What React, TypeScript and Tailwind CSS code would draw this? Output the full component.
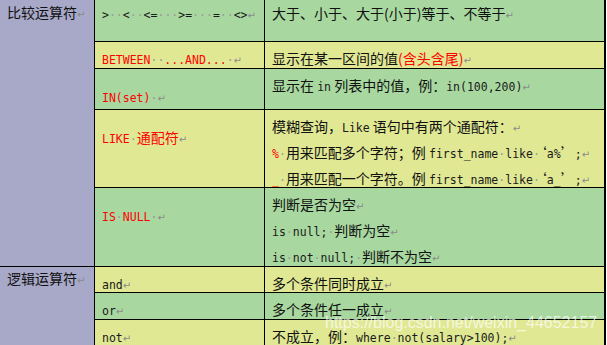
import React from "react";

const green = "bg-[#a8d8a0]";
const yellow = "bg-[#e0e894]";
const mono = "font-['DejaVu_Sans_Mono',monospace] text-[11.5px] leading-none";

// word "show formatting" marks
const Ret = () => (
  <span className="font-['DejaVu_Sans',sans-serif] text-[10px] leading-none text-[#8a8a8a]">↵</span>
);
const Sp = ({ n = 1 }: { n?: number }) => (
  <span className="text-[#9a9a9a]">{"·".repeat(n)}</span>
);
const M = ({ children, red }: { children: React.ReactNode; red?: boolean }) => (
  <span className={`${mono} ${red ? "text-[#ff0000]" : "text-[#1a1a1a]"}`}>{children}</span>
);
const Red = ({ children }: { children: React.ReactNode }) => (
  <span className="text-[#ff0000]">{children}</span>
);

export default function App() {
  return (
    <div className="relative w-[607px] h-[345px] overflow-hidden bg-white font-['Noto_Sans_CJK_SC',sans-serif] text-[14px] text-[#111]">
      <div className="grid w-fit grid-cols-[94px_169px_339px] grid-rows-[41px_26px_40px_77px_78px_25px_26px_26px] gap-px bg-black pr-[2px]">
        {/* 比较运算符 */}
        <div className="row-span-5 bg-[#a8a8c8] pl-[7px] pt-[1px] leading-[23px]">
          比较运算符<Ret />
        </div>
        <div className={`${green} pl-[7px] leading-[26px]`}>
          <M>
            &gt;<Sp n={2} />&lt;<Sp n={2} />&lt;=<Sp n={3} />&gt;=<Sp n={3} />=<Sp n={2} />&lt;&gt;
          </M>
          <Ret />
        </div>
        <div className={`${green} pl-[7px] leading-[26px]`}>
          大于、小于、大于(小于)等于、不等于<Ret />
        </div>

        <div className={`${yellow} pl-[7px] pt-[3px] leading-[26px]`}>
          <M red>
            BETWEEN<Sp n={2} />...AND...<Sp />
          </M>
          <Ret />
        </div>
        <div className={`${yellow} pl-[7px] pt-[3px] leading-[26px]`}>
          显示在某一区间的值<Red>(含头含尾)</Red>
          <Ret />
        </div>

        <div className={`${green} pl-[7px] pt-[14px] leading-[26px]`}>
          <M red>
            IN(set)<Sp />
          </M>
          <Ret />
        </div>
        <div className={`${green} pl-[7px] pt-[3px] leading-[26px]`}>
          显示在 <M>in</M> 列表中的值，例：<M>in(100,200)</M>
          <Ret />
        </div>

        <div className={`${yellow} pl-[7px] pt-[14px] leading-[26px]`}>
          <M red>
            LIKE<Sp />
          </M>
          <Red>通配符</Red>
          <Ret />
        </div>
        <div className={`${yellow} pl-[7px] pt-[3px] leading-[26px]`}>
          <div>
            模糊查询，<M>Like</M> 语句中有两个通配符：<Ret />
          </div>
          <div>
            <M red>%</M>
            <M>
              <Sp />
            </M>
            用来匹配多个字符；例 <M>first_name<Sp />like<Sp /></M>‘<M>a%</M>’<M>;</M>
            <Ret />
          </div>
          <div>
            <M red>_</M>
            <M>
              <Sp />
            </M>
            用来匹配一个字符。例 <M>first_name<Sp />like<Sp /></M>‘<M>a_</M>’<M>;</M>
            <Ret />
          </div>
        </div>

        <div className={`${green} pl-[7px] pt-[14px] leading-[26px]`}>
          <M red>
            IS<Sp />NULL<Sp />
          </M>
          <Ret />
        </div>
        <div className={`${green} pl-[7px] pt-[3px] leading-[26px]`}>
          <div>
            判断是否为空<Ret />
          </div>
          <div>
            <M>
              is<Sp />null;<Sp />
            </M>
            判断为空<Ret />
          </div>
          <div>
            <M>
              is<Sp />not<Sp />null;<Sp />
            </M>
            判断不为空<Ret />
          </div>
        </div>

        {/* 逻辑运算符 */}
        <div className="row-span-3 bg-[#a8a8c8] pl-[7px] leading-[23px]">
          逻辑运算符<Ret />
        </div>
        <div className={`${yellow} pl-[7px] pt-[3px] leading-[26px]`}>
          <M>and</M>
          <Ret />
        </div>
        <div className={`${yellow} pl-[7px] pt-[3px] leading-[26px]`}>
          多个条件同时成立<Ret />
        </div>

        <div className={`${green} pl-[7px] pt-[3px] leading-[26px]`}>
          <M>or</M>
          <Ret />
        </div>
        <div className={`${green} pl-[7px] pt-[3px] leading-[26px]`}>
          多个条件任一成立<Ret />
        </div>

        <div className={`${yellow} pl-[7px] pt-[3px] leading-[26px]`}>
          <M>not</M>
          <Ret />
        </div>
        <div className={`${yellow} pl-[7px] pt-[3px] leading-[26px]`}>
          不成立，例：
          <M>
            where<Sp />not(salary&gt;100);
          </M>
          <Ret />
        </div>
      </div>

      {/* watermark */}
      <div className="pointer-events-none absolute left-[325px] top-[315px] font-['Liberation_Sans',sans-serif] text-[16px] leading-none text-white/70">
        https://blog.csdn.net/weixin_44652157
      </div>
    </div>
  );
}
